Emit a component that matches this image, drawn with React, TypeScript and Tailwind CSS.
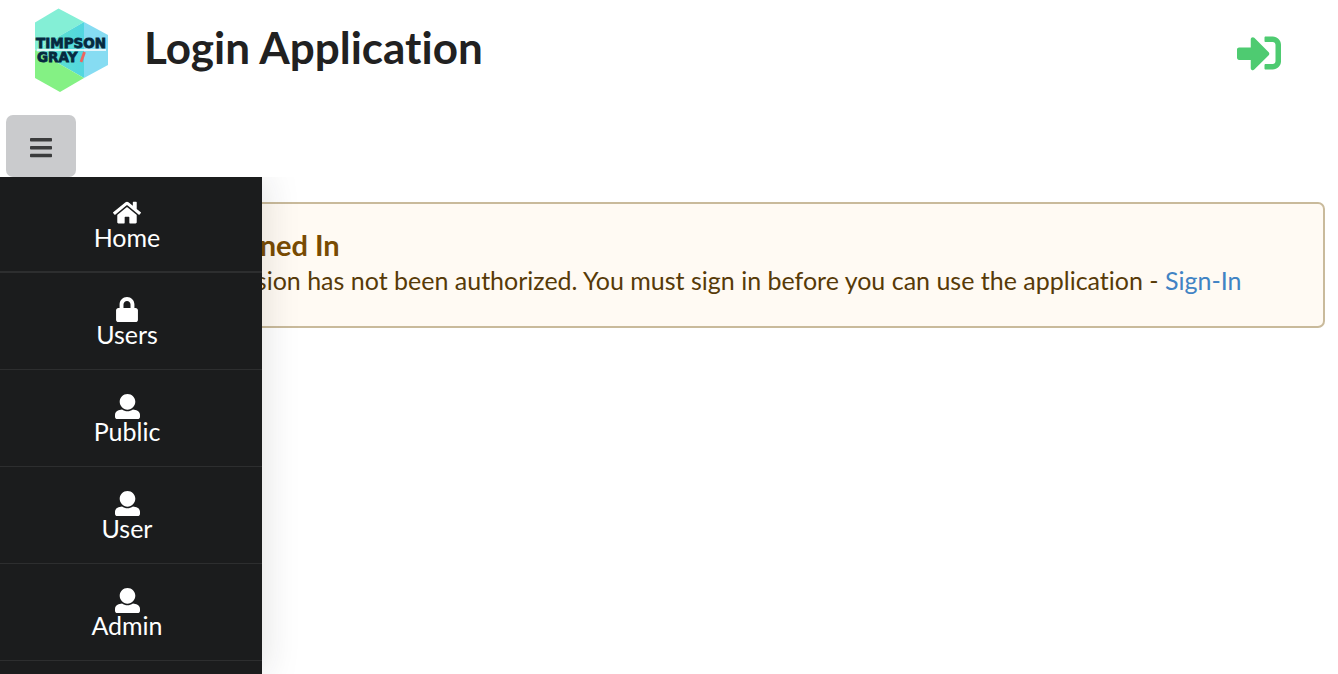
import type { ReactNode } from 'react';
import { FaLock, FaSignInAlt } from 'react-icons/fa';

function HomeIcon() {
  return (
    <svg viewBox="0 0 576 512" fill="currentColor" className="h-[25px] w-7" aria-hidden="true">
      <path d="M488 312.7V456c0 13.3-10.7 24-24 24H348c-6.6 0-12-5.4-12-12V356c0-6.6-5.4-12-12-12h-72c-6.6 0-12 5.4-12 12v112c0 6.6-5.4 12-12 12H112c-13.3 0-24-10.7-24-24V312.7c0-3.6 1.6-7 4.4-9.3l188-154.8c4.4-3.6 10.8-3.6 15.3 0l188 154.8c2.7 2.3 4.3 5.7 4.3 9.3zm83.6-60.9L488 182.9V44.4c0-6.6-5.4-12-12-12h-56c-6.6 0-12 5.4-12 12V117l-89.5-73.7c-17.7-14.6-43.3-14.6-61 0L4.4 251.8c-5.1 4.2-5.8 11.8-1.6 16.9l25.5 31c4.2 5.1 11.8 5.8 16.9 1.6l235.2-193.7c4.4-3.6 10.8-3.6 15.3 0l235.2 193.7c5.1 4.2 12.7 3.5 16.9-1.6l25.5-31c4.2-5.2 3.4-12.7-1.7-16.9z" />
    </svg>
  );
}

function UserIcon() {
  return (
    <svg viewBox="0 0 512 512" fill="currentColor" className="size-[25px]" aria-hidden="true">
      <path d="M256 0c88.366 0 160 71.634 160 160s-71.634 160-160 160S96 248.366 96 160 167.634 0 256 0zm183.283 333.821l-71.313-17.828c-74.923 53.89-165.738 41.864-223.94 0l-71.313 17.828C29.981 344.505 0 382.903 0 426.955V464c0 26.51 21.49 48 48 48h416c26.51 0 48-21.49 48-48v-37.045c0-44.052-29.981-82.45-72.717-93.134z" />
    </svg>
  );
}

function BarsIcon() {
  return (
    <svg viewBox="0 0 22 20" fill="currentColor" className="h-5 w-[22px]" aria-hidden="true">
      <rect y="0" width="22" height="3.5" rx="0.8" />
      <rect y="8" width="22" height="3.5" rx="0.8" />
      <rect y="15.7" width="22" height="3.5" rx="0.8" />
    </svg>
  );
}

function Logo() {
  return (
    <svg viewBox="0 0 76 86" className="h-[86px] w-[76px]" role="img" aria-label="Timpson Gray">
      <defs>
        <linearGradient id="logo-teal" gradientUnits="userSpaceOnUse" x1="1" y1="43" x2="50" y2="43">
          <stop offset="0.1" stopColor="#84efd6" />
          <stop offset="0.5" stopColor="#5bdfd2" />
          <stop offset="1" stopColor="#52d6e0" />
        </linearGradient>
      </defs>
      <path d="M24.5 1.5 1 15.5V43l49-28Z" fill="#84efd6" />
      <path d="M50 15 74 28v30L50 71Z" fill="#86dcf2" />
      <path d="M50 15v56L1 43Z" fill="url(#logo-teal)" />
      <path d="M1 43 50 71 26 85 1 71Z" fill="#84f184" />
      <path d="M3 43h69" stroke="#fff" strokeWidth="1.6" />
      <g fill="#06293f" stroke="#06293f" strokeWidth="0.8" fontFamily="'DejaVu Sans', sans-serif" fontWeight="700">
        <text x="2" y="41" fontSize="13.5">TIMPSON</text>
        <text x="3" y="55" fontSize="13.5">GRAY</text>
      </g>
      <path d="m47 55 3.500-10" stroke="#ed6560" strokeWidth="2.8" />
    </svg>
  );
}

const items: { label: string; icon: ReactNode }[] = [
  { label: 'Home', icon: <HomeIcon /> },
  { label: 'Users', icon: <FaLock className="h-[25px] w-[22px]" /> },
  { label: 'Public', icon: <UserIcon /> },
  { label: 'User', icon: <UserIcon /> },
  { label: 'Admin', icon: <UserIcon /> },
];

export default function App() {
  return (
    <div className="flex min-h-screen flex-col bg-white font-['Lato',sans-serif] text-[25px] leading-9 text-[#212121] [font-variant-ligatures:none]">
      <header className="flex h-[93px] items-start pt-[7px] pr-[57px] pl-[34px]">
        <Logo />
        <h1 className="ml-[34px] pt-3 text-[44px] leading-14 font-bold">Login Application</h1>
        <button type="button" aria-label="Sign in" className="mt-6 ml-auto text-[#4ecb71]">
          <FaSignInAlt className="size-11" />
        </button>
      </header>
      <div className="flex px-1.5 pt-[22px]">
        <button type="button" aria-label="Menu" className="flex h-[62px] w-[70px] items-center justify-center rounded-[7px] bg-[#cacbcd] pt-1 text-[#3b3c3d]">
          <BarsIcon />
        </button>
      </div>
      <main className="relative flex-1 overflow-hidden px-[13px] pt-[25px]">
        <section className="rounded-[7px] border-2 border-[#c9ba9b] bg-[#fffaf3] pt-[23px] pr-[38px] pb-7 pl-[150px] text-[#573a08]">
          <h2 className="text-[29px] leading-9 font-bold text-[#794b02]">Not Signed In</h2>
          <p className="leading-[35px]">
            Your session has not been authorized. You must sign in before you can use the application -{' '}
            <a href="#sign-in" className="text-[#4183c4]">Sign-In</a>
          </p>
        </section>
        <nav aria-label="Main" className="absolute inset-y-0 left-0 w-[262px] bg-[#1b1c1d] shadow-[0_0_36px_rgba(34,36,38,0.15)]">
          <ul>
            {items.map((item) => (
              <li key={item.label} className="h-[97px] border-b border-[#2d2e2f] pt-6 first:h-24 first:border-b-2 first:pt-[23px]">
                <a href="#menu" className="flex flex-col items-center pr-2 text-white">
                  {item.icon}
                  <span className="leading-6">{item.label}</span>
                </a>
              </li>
            ))}
          </ul>
        </nav>
      </main>
    </div>
  );
}
